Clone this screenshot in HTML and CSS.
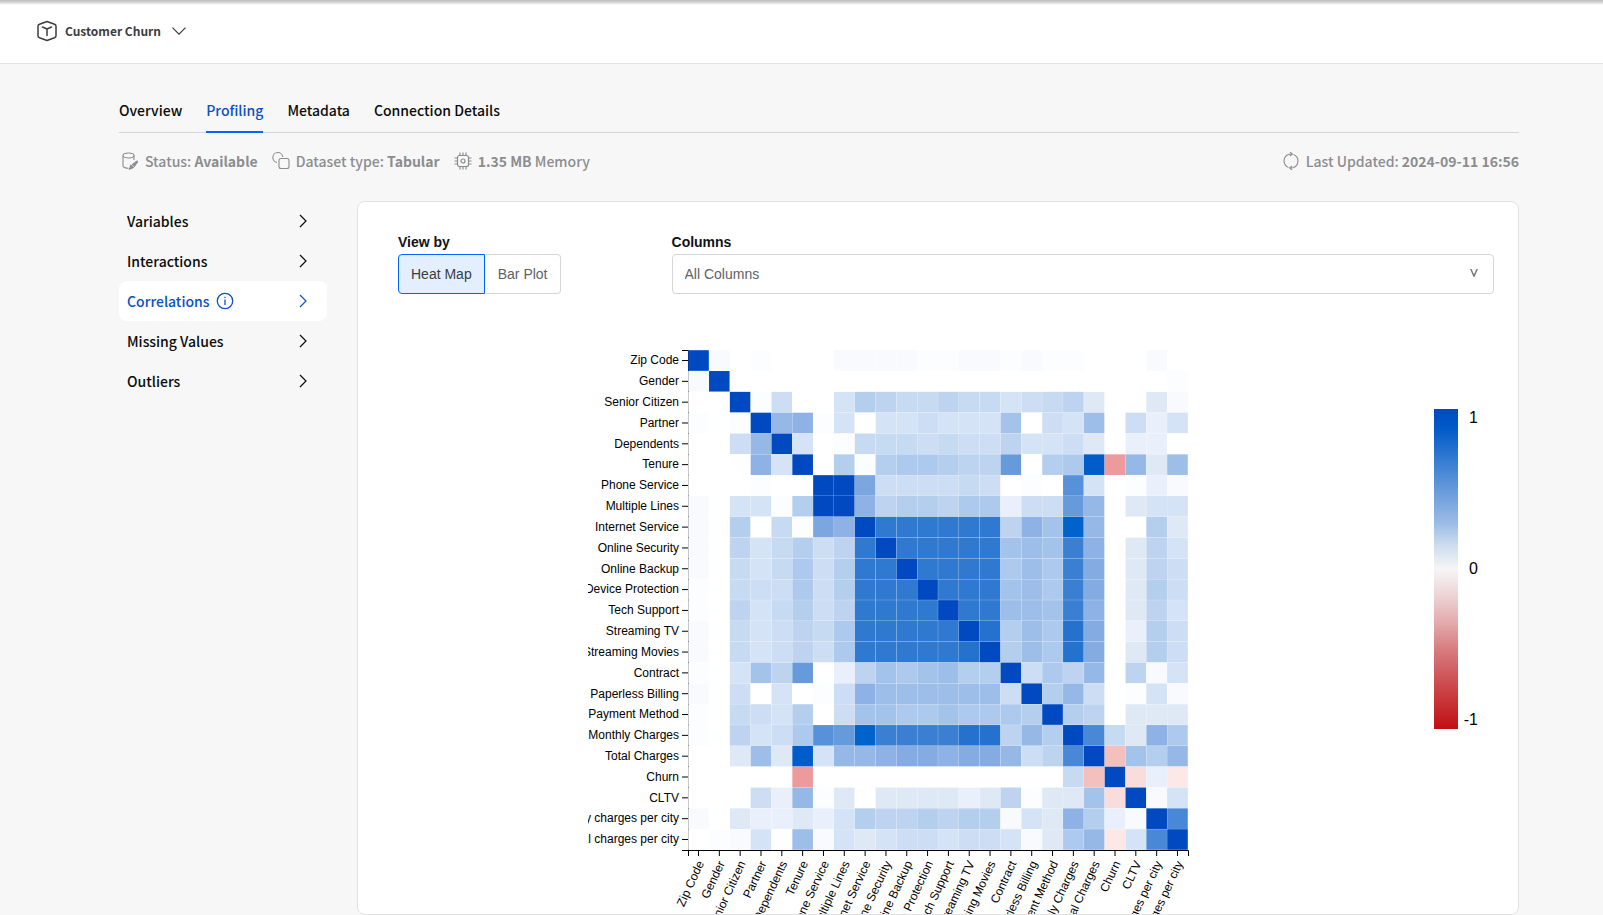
FILE: index.html
```html
<!DOCTYPE html>
<html lang="en">
<head>
<meta charset="utf-8">
<title>Customer Churn - Profiling</title>
<link rel="stylesheet" href="styles.css">
</head>
<body>
<header class="topbar">
  <button class="dataset-switch" type="button">
    <svg class="icon-cube" viewBox="0 0 22 22" fill="none" stroke="currentColor" stroke-width="1.5" stroke-linejoin="round" stroke-linecap="round"><path d="M11 1.500 18.500 4.200Q20 4.800 20 6.200V15.800Q20 17.200 18.500 17.800L11 20.500 3.500 17.800Q2 17.200 2 15.800V6.200Q2 4.800 3.500 4.200Z"/><path d="M6.500 7 11 9 15.500 7M11 9V15.500"/></svg>
    <span>Customer Churn</span>
    <svg class="icon-down" viewBox="0 0 14 8" fill="none" stroke="currentColor" stroke-width="1.200"><path d="M.5.700 7 7.200 13.500.700"/></svg>
  </button>
</header>
<main class="page">
  <nav class="tabs" aria-label="Dataset">
    <a class="tab" href="#overview">Overview</a>
    <a class="tab tab-active" href="#profiling" aria-current="page">Profiling</a>
    <a class="tab" href="#metadata">Metadata</a>
    <a class="tab" href="#connection">Connection Details</a>
  </nav>
  <div class="meta">
    <span class="meta-item"><svg class="meta-icon" viewBox="0 0 18 18" fill="none" stroke="currentColor" stroke-width="1.100"><ellipse cx="7.500" cy="3.500" rx="5.500" ry="2.500"/><path d="M2 3.500V14Q2.500 16 7.500 16.300M13 3.500V8"/><path d="M8.500 17.200 9.800 13.300 12.300 15.600Z" fill="currentColor"/><path d="M11.500 12.500 16 9 16.500 10 13.300 14.300Z" fill="currentColor"/></svg><span>Status: <b>Available</b></span></span>
    <span class="meta-item"><svg class="meta-icon" viewBox="0 0 18 18" fill="none" stroke="currentColor" stroke-width="1.100"><path d="M5 10.500A5 5 0 1 1 10.800 5"/><rect x="7" y="6.500" width="10" height="10" rx="2"/></svg><span>Dataset type: <b>Tabular</b></span></span>
    <span class="meta-item"><svg class="meta-icon" viewBox="0 0 18 18" fill="none" stroke="currentColor" stroke-width="1.200"><rect x="3.500" y="3.500" width="11" height="11" rx="2"/><circle cx="9" cy="9" r="2"/><path d="M6 .5v3M9 .5v3M12 .5v3M6 14.500v3M9 14.500v3M12 14.500v3M.5 6h3M.5 9h3M.5 12h3M14.500 6h3M14.500 9h3M14.500 12h3"/></svg><span><b>1.35 MB</b> Memory</span></span>
    <span class="meta-item meta-updated"><svg class="meta-icon" viewBox="0 0 18 18" fill="none" stroke="currentColor" stroke-width="1.100"><path d="M6.500 15.500A7 7 0 0 1 7 2.300L10 2M8 0 10.300 2 8 4M11.500 2.500A7 7 0 0 1 11 15.700L8 16M10 14 7.700 16 10 18"/></svg><span>Last Updated: <b>2024-09-11 16:56</b></span></span>
  </div>
  <div class="content">
    <nav class="side" aria-label="Profiling">
      <a class="side-item" href="#variables"><span>Variables</span><svg class="chev" viewBox="0 0 8 14"><path d="M1 1 7 7 1 13"/></svg></a>
      <a class="side-item" href="#interactions"><span>Interactions</span><svg class="chev" viewBox="0 0 8 14"><path d="M1 1 7 7 1 13"/></svg></a>
      <a class="side-item side-active" href="#correlations" aria-current="page"><span>Correlations</span><svg class="info" viewBox="0 0 18 18" fill="none" stroke="currentColor"><circle cx="9" cy="9" r="7.700" stroke-width="1.300"/><path d="M9 7.500V13M9 4.700V6" stroke-width="1.300"/></svg><svg class="chev" viewBox="0 0 8 14"><path d="M1 1 7 7 1 13"/></svg></a>
      <a class="side-item" href="#missing"><span>Missing Values</span><svg class="chev" viewBox="0 0 8 14"><path d="M1 1 7 7 1 13"/></svg></a>
      <a class="side-item" href="#outliers"><span>Outliers</span><svg class="chev" viewBox="0 0 8 14"><path d="M1 1 7 7 1 13"/></svg></a>
    </nav>
    <section class="card">
      <div class="controls">
        <div class="field" role="group" aria-labelledby="view-label">
          <span class="label" id="view-label">View by</span>
          <div class="segmented">
            <button class="seg seg-on" type="button" aria-pressed="true">Heat Map</button>
            <button class="seg" type="button" aria-pressed="false">Bar Plot</button>
          </div>
        </div>
        <div class="field field-wide">
          <label class="label" for="columns">Columns</label>
          <div class="select-wrap">
            <select class="select" id="columns"><option>All Columns</option></select>
            <svg class="select-mark" viewBox="0 0 8 8" fill="none" stroke="currentColor" stroke-width="1.500"><path d="M.8 0 4 7.200 7.200 0"/></svg>
          </div>
        </div>
      </div>
      <div class="chart">
        <div class="plot"><svg class="heatmap" id="heatmap" width="616" height="594" role="img" aria-label="Correlation heat map"></svg></div>
        <div class="legend">
          <div class="legend-bar"></div>
          <div class="legend-scale"><span>1</span><span>0</span><span>-1</span></div>
        </div>
      </div>
    </section>
  </div>
</main>
<script src="script.js"></script>
</body>
</html>
```
FILE: styles.css
```css
* { box-sizing: border-box; }
body {
  margin: 0;
  background: #f7f7f7;
  color: #0b0b0c;
  font-family: "Noto Sans CJK SC", "Noto Sans", sans-serif;
  font-size: 14px;
  font-weight: 500;
  line-height: 24px;
}
a { color: inherit; text-decoration: none; }
button, select { font: inherit; color: inherit; }
svg { display: block; flex: none; }
.topbar {
  height: 64px;
  display: flex;
  align-items: center;
  padding: 0 36px 2px;
  background: linear-gradient(#bfbfbf, #cfcfcf 2px, #fff 5px);
  border-bottom: 1px solid #e4e4e4;
}
.dataset-switch {
  display: flex;
  align-items: center;
  gap: 7px;
  padding: 0;
  border: 0;
  background: none;
  color: #3b3d40;
  font-size: 12px;
  font-weight: 700;
}
.icon-cube { width: 22px; height: 22px; }
.icon-down { width: 14px; height: 8px; margin-left: 4px; }
.page { padding: 34px 84px 0 119px; }
.tabs { display: flex; gap: 24px; border-bottom: 1px solid #d5d6d8; }
.tab { padding-bottom: 9px; margin-bottom: -1px; border-bottom: 2px solid transparent; }
.tab-active { color: #0b50c8; border-color: #0065ff; }
.meta {
  display: flex;
  gap: 14px;
  padding: 16px 0 0 2px;
  color: #8b8d90;
}
.meta-item { display: flex; align-items: center; gap: 6px; }
.meta-updated { margin-left: auto; }
.meta-icon { width: 18px; height: 18px; }
.content { display: flex; gap: 30px; padding-top: 28px; align-items: flex-start; }
.side { width: 208px; flex: none; }
.side-item {
  display: flex;
  align-items: center;
  gap: 6px;
  height: 40px;
  padding: 0 20px 0 8px;
  border-radius: 8px;
}
.side-active { background: #fff; color: #0b50c8; }
.chev { width: 8px; height: 14px; margin-left: auto; fill: none; stroke: currentColor; stroke-width: 1.2; }
.info { width: 18px; height: 18px; }
.card {
  flex: 1;
  min-width: 0;
  background: #fff;
  border: 1px solid #e2e2e3;
  border-radius: 8px;
  font-family: "Liberation Sans", Arial, sans-serif;
  font-weight: 400;
}
.controls { display: flex; gap: 111px; padding: 32px 24px 0 40px; }
.field-wide { flex: 1; }
.label { display: block; margin-bottom: 4px; font-size: 14px; font-weight: 700; line-height: 16px; color: #111315; }
.segmented { display: flex; }
.seg {
  height: 40px;
  padding: 0 12px;
  border: 1px solid #d5d6d8;
  border-left-color: #fff;
  border-radius: 0 4px 4px 0;
  background: #fff;
  color: #606266;
  font-size: 14px;
}
.seg-on {
  border-color: #0065ff;
  border-radius: 4px 0 0 4px;
  background: #e3eeff;
  color: #3b3d40;
}
.select-wrap { position: relative; }
.select {
  width: 100%;
  height: 40px;
  padding: 0 12px;
  border: 1px solid #d5d6d8;
  border-radius: 4px;
  appearance: none;
  background: #fff;
  color: #606266;
  font-size: 14px;
}
.select-mark { position: absolute; top: 15px; right: 16px; width: 8px; height: 8px; color: #77797d; pointer-events: none; }
.chart { display: flex; align-items: flex-start; padding: 26px 40px 0 0; }
.plot { flex: 1; display: flex; justify-content: center; }
.heatmap { overflow: hidden; font-size: 12px; }
.legend { display: flex; gap: 5px; padding-top: 89px; }
.legend-bar {
  width: 24px;
  height: 320px;
  background: linear-gradient(#004ac1, #005bc8 6%, #1f6ece 12%, #4a8ad6 20%, #7fa9e0 30%, #9dbde6 36%, #c9daee 42%, #f6f6f6 50%, #edd5d6 58%, #e3a9ab 67%, #d7787b 76%, #cb4245 88%, #c01014);
}
.legend-scale {
  width: 15px;
  display: flex;
  flex-direction: column;
  justify-content: space-between;
  text-align: right;
  font-size: 16px;
  line-height: 18px;
  color: #000;
}
```
FILE: script.js
```js
const names = ["Zip Code", "Gender", "Senior Citizen", "Partner", "Dependents", "Tenure",
  "Phone Service", "Multiple Lines", "Internet Service", "Online Security", "Online Backup",
  "Device Protection", "Tech Support", "Streaming TV", "Streaming Movies", "Contract",
  "Paperless Billing", "Payment Method", "Monthly Charges", "Total Charges", "Churn", "CLTV",
  "Monthly charges per city", "Total charges per city"];

// Colour steps of the correlation scale.
const scale = {
  0: "#ffffff", a: "#fcfdff", b: "#f8fafe", c: "#eaf0fb", d: "#dfe9f6", e: "#d4e3f5",
  f: "#cdddf3", g: "#c6daf2", h: "#bdd3ef", i: "#b4ceee", j: "#adc9ed", k: "#a4c3ea",
  l: "#9dbee8", m: "#95b8e6", n: "#8eb2e5", o: "#84ace3", p: "#7ba6e0", q: "#659adb",
  r: "#5691d9", s: "#4888d6", t: "#3b7fd3", u: "#3079d0", v: "#2471ce", w: "#0063cb",
  x: "#005cc8", z: "#0049c0", R: "#ec9a9b", S: "#f4c0be", T: "#f9dcdc", U: "#fce8e7"
};

// Upper triangle of the symmetric matrix, each row starting on the diagonal.
const upper = [
  "zb0a000bbbbaabbabaa000b0",
  "z000000000000000000000a",
  "zaf00eihgghggefghd00db",
  "zmnae0eefeeek0fel0fce",
  "ze0agggfgffheefd0cc0",
  "z0iaijjihhq0ijxRmdl",
  "zzpffffgf0a0re0acb",
  "znhiihjjcffqm0dee",
  "zuuuuuuhnkwm00id",
  "zuuuuuklktn0dhe",
  "zuuuujljto0dhf",
  "zuuukljto0dif",
  "zuullktn0dhe",
  "zviljvo0cif",
  "ziljvo0dif",
  "zfjhm0hbe",
  "zimf0aeb",
  "zih0ddd",
  "zsgdnj",
  "zSkim",
  "zTcU",
  "zbe",
  "zs",
  "z"
];

const NS = "http://www.w3.org/2000/svg";
const size = 500, count = names.length;
const step = size / (count + 0.01), band = step * 0.99, offset = step * 0.01;

function add(parent, tag, attrs, text) {
  const node = document.createElementNS(NS, tag);
  for (const key in attrs) node.setAttribute(key, attrs[key]);
  if (text) node.textContent = text;
  parent.appendChild(node);
  return node;
}

const root = add(document.getElementById("heatmap"), "g", { transform: "translate(100,30)" });
const axis = { fill: "none", stroke: "#000" };
add(root, "path", { ...axis, d: "M-6,.5H.5V500.5H-6" });
add(root, "path", { ...axis, d: "M.5,506V500.5H500.5V506" });

names.forEach((name, i) => {
  const mid = offset + i * step + band / 2;
  add(root, "path", { ...axis, d: `M-6,${mid}H0` });
  add(root, "text", { x: -9, y: mid, dy: ".32em", "text-anchor": "end" }, name);
  add(root, "path", { ...axis, d: `M${mid},500V506` });
  const tick = add(root, "g", { transform: `translate(${mid},500)` });
  add(tick, "text", { x: 0, y: 9, dx: "-.8em", dy: ".15em", "text-anchor": "end", transform: "rotate(-65)" }, name);
});

for (let r = 0; r < count; r++) {
  for (let c = 0; c < count; c++) {
    const key = upper[Math.min(r, c)][Math.abs(r - c)];
    add(root, "rect", { x: offset + c * step, y: offset + r * step, width: band, height: band, fill: scale[key] });
  }
}
```
